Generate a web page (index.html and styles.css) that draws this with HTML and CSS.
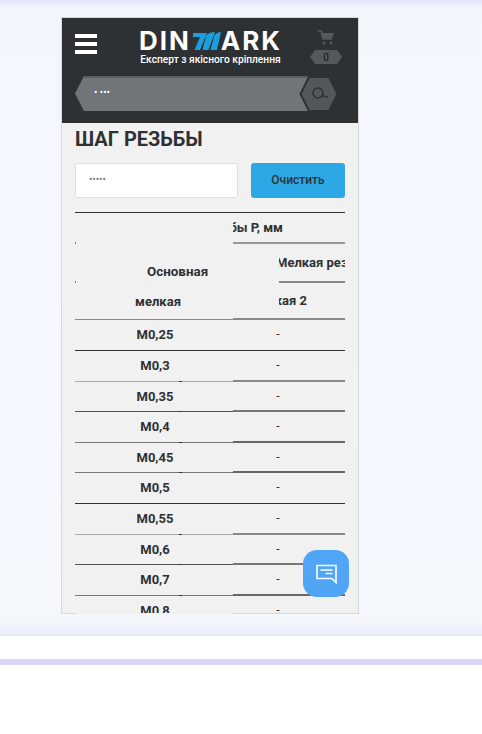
FILE: index.html
```html
<!doctype html>
<html>
<head>
	<meta charset="utf-8" />
	<title>Шаг резьбы</title>
	<link rel="stylesheet" href="styles.css">
</head>
<body>
<div class="stage">
	<div class="frame">
		<div class="top">
			<div class="top-row">
				<div class="burger"><span></span><span></span><span></span></div>
				<div class="logo">
					<div class="logo-name">DIN<svg class="logo-m" viewBox="0 0 28 18" width="28" height="18"><path d="M0 1H14L7 18H1.500L7 5H0zM13 4C15 1 18 0 22 0L15.500 18H9.500zM21.500 3C23.500 1 25.500 0 28 0L24 18H17.500z" fill="#1b9ed9"/></svg>ARK</div>
					<div class="logo-sub">Експерт з якісного кріплення</div>
				</div>
				<div class="cart">
					<svg viewBox="0 0 16 15" width="16" height="15"><path d="M0 1h3l2 8h9" fill="none" stroke="#555a5d" stroke-width="1.500"/><path d="M4 3h12l-2 5H5z" fill="#555a5d"/><circle cx="6" cy="13" r="1.500" fill="#555a5d"/><circle cx="13" cy="13" r="1.500" fill="#555a5d"/></svg>
					<div class="cart-count">0</div>
				</div>
			</div>
			<div class="search">
				<div class="search-field">• •••</div>
				<div class="search-btn">
					<svg viewBox="0 0 40 36" width="40" height="36"><path d="M1.500 18 L10 1 H30 L38.500 18 L30 35 H10 Z" fill="#53575a" stroke="#2e3133" stroke-width="2"/><circle cx="19" cy="17" r="5" fill="none" stroke="#2e3133" stroke-width="1.500"/><path d="M23.500 19.500 L29 21.500" stroke="#2e3133" stroke-width="1.500"/></svg>
				</div>
			</div>
		</div>
		<div class="content">
			<h1 class="title">ШАГ РЕЗЬБЫ</h1>
			<div class="filter">
				<div class="filter-input">•••••</div>
				<div class="filter-btn">Очистить</div>
			</div>
			<div class="thead">
				<i class="tick tick-a"></i>
				<i class="tick tick-b"></i>
				<div class="th-main">Основная</div>
				<div class="th-group"><span>Шаг резьбы Р, мм</span></div>
				<div class="th-sub"><span>Мелкая резьба</span></div>
				<div class="th-col">мелкая</div>
				<div class="th-col2"><span>мелкая 2</span></div>
			</div>
			<div class="row line-a"><div class="c1">М0,25</div><div class="c2">-</div></div>
			<div class="row line-b"><div class="c1">М0,3</div><div class="c2">-</div></div>
			<div class="row line-c"><div class="c1">М0,35</div><div class="c2">-</div></div>
			<div class="row line-d"><div class="c1">М0,4</div><div class="c2">-</div></div>
			<div class="row line-d"><div class="c1">М0,45</div><div class="c2">-</div></div>
			<div class="row line-a"><div class="c1">М0,5</div><div class="c2">-</div></div>
			<div class="row line-b"><div class="c1">М0,55</div><div class="c2">-</div></div>
			<div class="row line-c"><div class="c1">М0,6</div><div class="c2">-</div></div>
			<div class="row line-d"><div class="c1">М0,7</div><div class="c2">-</div></div>
			<div class="row"><div class="c1">М0,8</div><div class="c2">-</div></div>
		</div>
		<div class="foot"><i></i><b></b><i></i></div>
		<div class="chat">
			<svg viewBox="0 0 21 20" width="21" height="20"><path d="M1 1.500h19v17l-4-4H1z" fill="none" stroke="#fff" stroke-width="1.600"/><path d="M4.500 6h12M9.500 9.500h7" stroke="#fff" stroke-width="1.300"/></svg>
		</div>
	</div>
</div>
<div class="bar"></div>
</body>
</html>
```

FILE: styles.css
```css
html,body{margin:0;padding:0;background:#fff;}
body{font-family:Roboto,"Liberation Sans",sans-serif;color:#2e3133;}
.stage{height:636px;padding-top:17px;box-sizing:border-box;
	background:linear-gradient(#e3e5f9 0,#f3f7fd 9px,#f4f8fd 622px,#e6ecf9 636px);}
.frame{width:296px;height:596px;margin-left:61px;position:relative;border:solid #d6d8d9;border-width:1px 1px 0;overflow:hidden;background:#f1f1f1;}

.top{height:105px;background:#2e3133;}
.top-row{display:flex;height:58px;}
.burger{width:22px;margin:16px 0 0 13px;display:flex;flex-direction:column;gap:4px;}
.burger span{height:4px;background:#fff;}
.logo{width:141px;margin:11px 0 0 43px;color:#fff;text-align:center;}
.logo-name{font-family:Inter,"Liberation Sans",sans-serif;font-weight:700;font-size:26px;line-height:24px;letter-spacing:2px;display:flex;justify-content:center;align-items:center;white-space:nowrap;}
.logo-m{margin:0 0 0 2px;flex:none;}
.logo-sub{font-size:10.200px;font-weight:500;line-height:12px;margin-top:1px;white-space:nowrap;}
.cart{width:32px;margin:12px 0 0 29px;text-align:center;}
.cart svg{display:block;margin:0 auto 5px;}
.cart-count{height:14px;line-height:15px;font-size:10px;background:#54585b;color:#111;
	clip-path:polygon(5px 0,calc(100% - 5px) 0,100% 50%,calc(100% - 5px) 100%,5px 100%,0 50%);}
.search{display:flex;margin-left:13px;height:35px;width:264px;}
.search-field{flex:1;background:#6f7579;box-shadow:inset 0 2px #595e61;color:#fff;font-size:10px;line-height:33px;padding-left:19px;margin-right:-14px;
	clip-path:polygon(9px 0,100% 0,100% 100%,9px 100%,0 50%);}
.search-btn{width:40px;height:36px;position:relative;}

.content{padding:0 13px;height:490px;overflow:hidden;}
.title{margin:0;font-size:20px;line-height:24px;padding-top:4px;font-weight:700;}
.filter{display:flex;gap:13px;margin-top:12px;}
.filter-input{width:161px;height:33px;background:#fff;border:1px solid #dedede;border-radius:3px;font-size:10px;line-height:32px;text-indent:13px;color:#777;}
.filter-btn{width:94px;height:35px;background:#2ca8e6;border-radius:3px;text-align:center;font-size:12px;font-weight:500;line-height:35px;}

.thead{display:grid;grid-template-columns:158px 112px;grid-template-rows:31px 39px 37.400px;margin-top:14px;border-top:1px solid #333;width:270px;font-size:13px;font-weight:700;position:relative;}
.tick{position:absolute;left:0;width:1px;height:2px;background:#777;}
.tick-a{top:29px;}
.tick-b{top:68px;}
.th-main{grid-column:1;grid-row:1/3;align-self:end;padding:0 0 4px 72px;white-space:nowrap;font-size:13.400px;}
.th-group,.th-sub,.th-col2{white-space:nowrap;display:flex;align-items:center;box-sizing:border-box;}
.th-group{grid-column:2;grid-row:1;overflow:hidden;justify-content:flex-end;padding-right:62px;border-bottom:2px solid #999;}
.th-sub{grid-column:2;grid-row:2;margin-left:46px;overflow:hidden;border-bottom:2px solid #888;}
.th-sub span{margin-left:-3px;}
.th-col{grid-column:1;grid-row:3;text-align:center;line-height:37px;padding-left:8px;border-bottom:1px solid #888;}
.th-col2{grid-column:2;grid-row:3;padding-left:46px;border-bottom:2px solid #888;}
.th-col2 span{width:28px;overflow:hidden;display:flex;justify-content:flex-end;}

.row{display:flex;width:270px;height:30.600px;}
.c1,.c2{line-height:29px;font-size:13px;box-sizing:border-box;}
.c1{width:158px;font-weight:700;text-align:center;padding-left:2px;position:relative;}
.c1:after{content:"";position:absolute;left:104px;bottom:-1px;width:3px;height:1px;background:#333;}
.c2{width:112px;text-align:center;padding-right:22px;font-size:12px;}
.line-a .c1,.line-a .c2{border-bottom:1px solid #333;}
.line-b .c1{border-bottom:1px solid #aaa;}
.line-b .c2{border-bottom:2px solid #888;}
.line-c .c1{border-bottom:1px solid #555;}
.line-c .c2{border-bottom:2px solid #777;}
.line-d .c1{border-bottom:1px solid #777;}
.line-d .c2{border-bottom:2px solid #666;}
.row:last-child .c1:after{display:none;}

.foot{display:flex;height:1px;}
.foot i{background:#d6d8d9;width:14px;}
.foot b{width:157px;}
.foot i:last-child{flex:1;}

.chat{position:absolute;left:241px;top:532px;width:46px;height:47px;border-radius:14px;background:#50a5f7;display:flex;align-items:center;justify-content:center;}
.bar{height:6px;margin-top:23px;background:#d8d6fa;}
```
